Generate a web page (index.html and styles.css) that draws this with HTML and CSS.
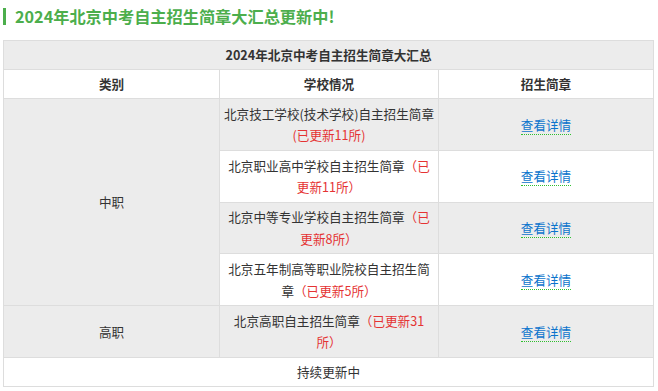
FILE: index.html
```html
<!DOCTYPE html>
<html lang="zh-CN">
<head>
<meta charset="utf-8">
<title>2024年北京中考自主招生简章大汇总</title>
<link rel="stylesheet" href="styles.css">
</head>
<body>
<div class="page">
  <h2 class="title">2024年北京中考自主招生简章大汇总更新中!</h2>
  <table class="summary">
    <colgroup>
      <col class="c1">
      <col class="c2">
      <col class="c3">
    </colgroup>
    <tr class="gray head">
      <th colspan="3">2024年北京中考自主招生简章大汇总</th>
    </tr>
    <tr class="head">
      <th>类别</th>
      <th>学校情况</th>
      <th>招生简章</th>
    </tr>
    <tr class="gray">
      <td rowspan="4">中职</td>
      <td>北京技工学校(技术学校)自主招生简章<span class="upd">(已更新11所)</span></td>
      <td><a class="more" href="#">查看详情</a></td>
    </tr>
    <tr>
      <td>北京职业高中学校自主招生简章<span class="upd">（已更新11所）</span></td>
      <td><a class="more" href="#">查看详情</a></td>
    </tr>
    <tr class="gray">
      <td>北京中等专业学校自主招生简章<span class="upd">（已更新8所）</span></td>
      <td><a class="more" href="#">查看详情</a></td>
    </tr>
    <tr>
      <td>北京五年制高等职业院校自主招生简章<span class="upd">（已更新5所）</span></td>
      <td><a class="more" href="#">查看详情</a></td>
    </tr>
    <tr class="gray">
      <td>高职</td>
      <td>北京高职自主招生简章<span class="upd">（已更新31<wbr>所）</span></td>
      <td><a class="more" href="#">查看详情</a></td>
    </tr>
    <tr class="head">
      <td colspan="3">持续更新中</td>
    </tr>
  </table>
</div>
</body>
</html>
```
FILE: styles.css
```css
html, body {
  margin: 0;
  padding: 0;
  background: #fff;
}
body {
  font-family: "Noto Sans CJK SC", "Microsoft YaHei", sans-serif;
  color: #333;
  font-size: 12.6px;
}
.page {
  padding: 8px 5px 0 3px;
}
.title {
  margin: 0;
  border-left: 3px solid #4cae4c;
  padding-left: 9px;
  font-size: 16.2px;
  line-height: 17px;
  font-weight: bold;
  color: #4cae4c;
}
.summary {
  margin-top: 15px;
  width: 650px;
  table-layout: fixed;
  border-collapse: collapse;
  border: 1px solid #ddd;
}
.c1 { width: 216px; }
.c2 { width: 219px; }
.c3 { width: 215px; }
.summary th,
.summary td {
  border: 1px solid #ddd;
  text-align: center;
  vertical-align: middle;
  line-height: 21.6px;
  padding: 3.8px 3px;
  font-size: 12.6px;
}
.summary th {
  font-weight: bold;
  color: #333;
}
.summary .head th,
.summary .head td {
  padding-top: 3.2px;
  padding-bottom: 3.2px;
}
.gray {
  background: #ececec;
}
.upd {
  color: #e53333;
}
.more {
  color: #0b74cc;
  text-decoration: none;
  border-bottom: 1px dotted #2fbf2f;
}
```
